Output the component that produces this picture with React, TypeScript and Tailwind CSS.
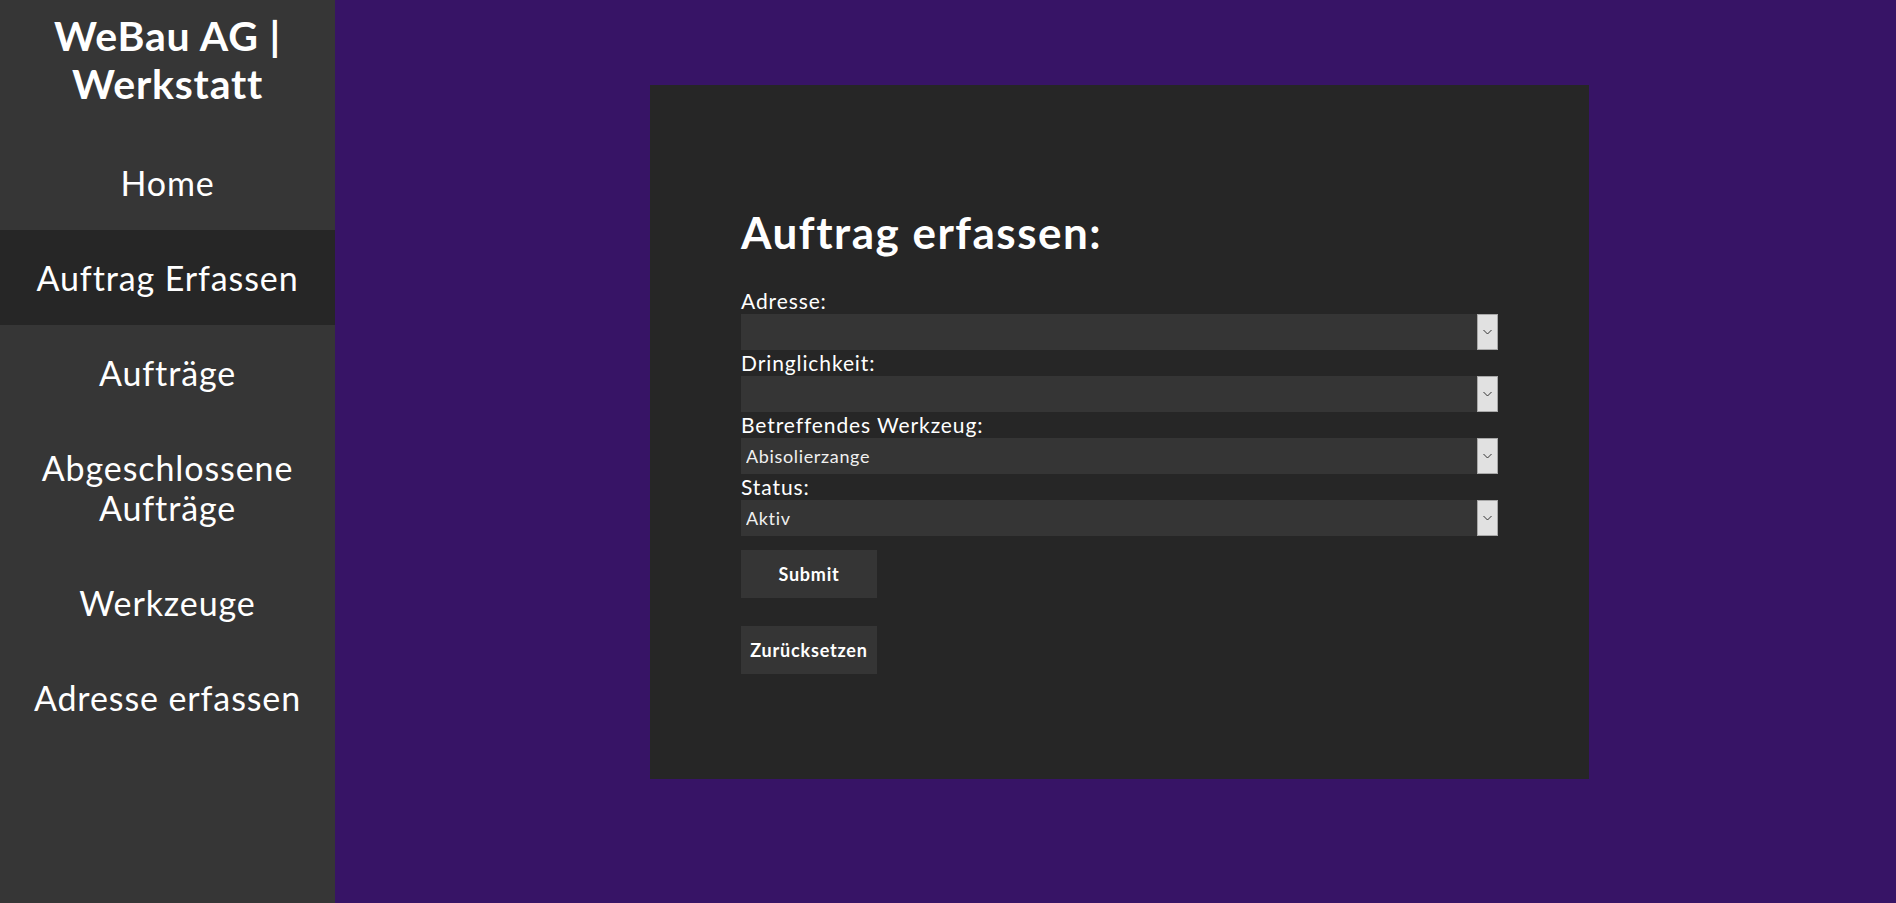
import { useState } from "react";

const navItems = [
  { label: "Home", active: false },
  { label: "Auftrag Erfassen", active: true },
  { label: "Aufträge", active: false },
  { label: "Abgeschlossene Aufträge", active: false },
  { label: "Werkzeuge", active: false },
  { label: "Adresse erfassen", active: false },
];

function Sidebar() {
  return (
    <div className="w-[335px] shrink-0 bg-[#363636] min-h-screen text-white">
      <div className="h-[135px] pt-[12px] text-center">
        <h1 className="text-[41px] leading-[48px] font-bold tracking-[0.8px]">
          WeBau AG |<br />
          Werkstatt
        </h1>
      </div>
      <nav className="flex flex-col">
        {navItems.map((item) => (
          <a
            key={item.label}
            href="#"
            className={
              "block py-[27.5px] px-[24px] text-center text-[34px] leading-[40px] tracking-[0.9px] " +
              (item.active ? "bg-[#262626]" : "")
            }
          >
            {item.label}
          </a>
        ))}
      </nav>
    </div>
  );
}

function SelectField({ label, options }: { label: string; options: string[] }) {
  const [value, setValue] = useState(options[0] ?? "");
  return (
    <div>
      <label className="block text-[21px] leading-[26px] tracking-[0.9px] text-white">{label}</label>
      <div className="relative h-[36px]">
        <select
          value={value}
          onChange={(e) => setValue(e.target.value)}
          className="appearance-none w-full h-[36px] bg-[#353535] text-[#f0f0f0] text-[18px] tracking-[0.65px] pl-[5px] pr-[24px] outline-none"
        >
          {options.map((o) => (
            <option key={o}>{o}</option>
          ))}
        </select>
        <div className="absolute right-0 top-0 h-[36px] w-[21px] bg-[#e1e1e1] border border-[#a8a8a8] flex items-center justify-center pointer-events-none">
          <svg width="9" height="6" viewBox="0 0 9 6">
            <path d="M0.5 1 L4.5 5 L8.5 1" fill="none" stroke="#333" strokeWidth="1" />
          </svg>
        </div>
      </div>
    </div>
  );
}

export default function App() {
  return (
    <div className="flex min-h-screen bg-[#371466] font-['Lato',sans-serif]">
      <Sidebar />
      <main className="flex-1 pl-[315px] pt-[85px]">
        <div className="w-[939px] bg-[#262626] px-[91px] pt-[123px] pb-[105px]">
          <h2 className="text-[44px] leading-[49px] font-bold tracking-[1.5px] text-white mb-[31px]">
            Auftrag erfassen:
          </h2>
          <form onSubmit={(e) => e.preventDefault()}>
            <SelectField label="Adresse:" options={[""]} />
            <SelectField label="Dringlichkeit:" options={[""]} />
            <SelectField label="Betreffendes Werkzeug:" options={["Abisolierzange", "Bohrmaschine"]} />
            <SelectField label="Status:" options={["Aktiv", "Abgeschlossen"]} />
            <button
              type="submit"
              className="block mt-[14px] w-[136px] h-[48px] bg-[#353535] text-white text-[18px] tracking-[0.8px] font-bold"
            >
              Submit
            </button>
            <button
              type="reset"
              className="block mt-[28px] w-[136px] h-[48px] bg-[#353535] text-white text-[18px] tracking-[0.8px] font-bold"
            >
              Zurücksetzen
            </button>
          </form>
        </div>
      </main>
    </div>
  );
}
